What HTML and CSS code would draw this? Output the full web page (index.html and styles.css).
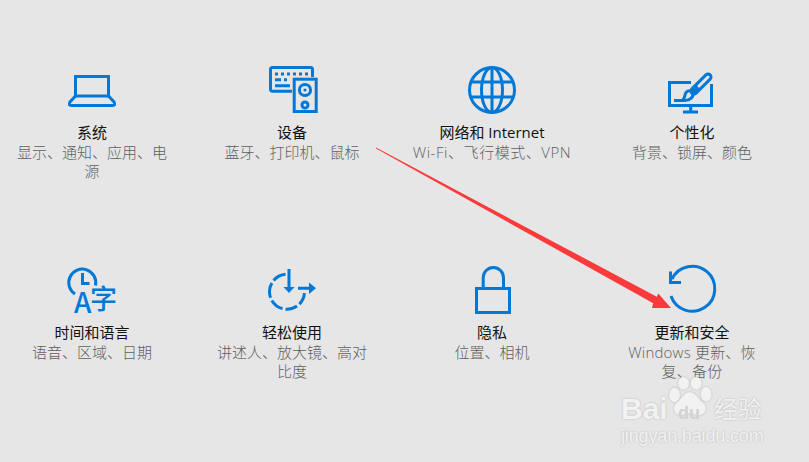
FILE: index.html
```html
<!DOCTYPE html>
<html>
<head>
	<meta charset="utf-8">
	<title>设置</title>
	<link rel="stylesheet" href="styles.css">
</head>
<body>
	<div class="grid">

		<div class="tile">
			<svg class="icon" viewBox="0 0 48 48">
				<rect x="7.5" y="10.5" width="33" height="19.5"/>
				<path d="M7.5 30 L2 36 Q0 39.5 3.5 39.5 H44.500 Q48 39.500 46 36 L40.500 30"/>
			</svg>
			<div class="title">系统</div>
			<div class="sub">显示、通知、应用、电源</div>
		</div>

		<div class="tile">
			<svg class="icon" viewBox="0 0 48 48">
				<path d="M24 25.200 H4.500 Q2.500 25.200 2.500 23 V3.500 Q2.500 1.500 4.500 1.500 H42.500 Q44.500 1.500 44.500 3.500 V11"/>
				<rect x="26.200" y="13.200" width="22" height="32.300"/>
				<circle cx="37" cy="24" r="5.600"/>
				<circle cx="37" cy="39" r="3"/>
				<path class="fill" d="M7 6.500h3v3h-3z M13 6.500h3v3h-3z M19 6.500h3v3h-3z M25 6.500h3v3h-3z M31 6.500h3v3h-3z M37 6.500h3v3h-3z M7 12.300h6v3h-6z M16 12.300h3v3h-3z M7 18.300h15v3h-15z"/>
				<circle class="fill" cx="37" cy="24" r="1.600"/>
			</svg>
			<div class="title">设备</div>
			<div class="sub">蓝牙、打印机、鼠标</div>
		</div>

		<div class="tile">
			<svg class="icon" viewBox="0 0 48 48">
				<circle cx="24" cy="24" r="22.500"/>
				<ellipse cx="24" cy="24" rx="10.500" ry="22.500"/>
				<path d="M24 1.500 V46.500 M3.500 16 H44.500 M3.500 31 H44.500"/>
			</svg>
			<div class="title">网络和 Internet</div>
			<div class="sub sub-wide">Wi-Fi、飞行模式、VPN</div>
		</div>

		<div class="tile">
			<svg class="icon" viewBox="0 0 48 48">
				<path d="M23 16.500 H1.500 V39.500 H43.500 V18"/>
				<path d="M22.700 39.500 V46 M15 46 H30"/>
				<path d="M6 34.500 H17 C22 34.500 26 31 25 26.500 C23.500 24 20 24 18 26.500 C16 29 18 32 14 34.500"/>
				<path class="handle" d="M26 25 L40 11"/>
				<path class="handle-in" d="M31 20 L40 11"/>
			</svg>
			<div class="title">个性化</div>
			<div class="sub">背景、锁屏、颜色</div>
		</div>

		<div class="tile">
			<svg class="icon" viewBox="0 0 48 48">
				<path d="M7 28 A13.500 13.500 0 1 1 27.500 19.500"/>
				<path d="M14.500 7 V17.500 H21.500"/>
				<text class="glyph glyph-a" x="6" y="47">A</text>
				<text class="glyph glyph-zi" x="22" y="43">字</text>
			</svg>
			<div class="title">时间和语言</div>
			<div class="sub">语音、区域、日期</div>
		</div>

		<div class="tile">
			<svg class="icon" viewBox="0 0 48 48">
				<circle cx="19" cy="25.700" r="17.500" pathLength="360" stroke-dasharray="40 10 40 10 45 10 50 10 45 100" stroke-dashoffset="-5"/>
				<path d="M21 3 V22 M30 22.300 H42"/>
				<path class="fill" d="M15.500 21 H26.500 L21 27z M41 16.500 L48 22.300 L41 28z"/>
			</svg>
			<div class="title">轻松使用</div>
			<div class="sub">讲述人、放大镜、高对比度</div>
		</div>

		<div class="tile">
			<svg class="icon" viewBox="0 0 48 48">
				<rect x="8.500" y="22.500" width="33" height="24"/>
				<path d="M15.200 21 V11.700 A10.150 10.150 0 0 1 35.500 11.700 V21"/>
			</svg>
			<div class="title">隐私</div>
			<div class="sub">位置、相机</div>
		</div>

		<div class="tile">
			<svg class="icon" viewBox="0 0 48 48">
				<path d="M3 30 A22.500 22.500 0 1 0 4 13"/>
				<path d="M2.500 5.500 V16.500 H13"/>
			</svg>
			<div class="title">更新和安全</div>
			<div class="sub sub-win">Windows 更新、恢复、备份</div>
		</div>

	</div>

	<!-- red arrow drawn on top of the screenshot -->
	<svg class="arrow" viewBox="0 0 809 462">
		<polygon points="376,147.500 656.800,296.700 658.300,293.500 671,308 652,308 653.200,303.300 376,148.500"/>
	</svg>

	<div class="mark">
		<svg class="paw" viewBox="0 0 60 50">
			<ellipse cx="14" cy="20" rx="6" ry="8"/>
			<ellipse cx="24" cy="7" rx="6" ry="7"/>
			<ellipse cx="38" cy="7" rx="6" ry="7"/>
			<ellipse cx="49" cy="19" rx="6" ry="8"/>
			<path d="M31 17 C38 17 40 25 46 29 C52 35 47 44 39 42 C33 40 29 40 23 42 C15 44 10 36 16 29 C22 25 24 17 31 17z"/>
		</svg>
		<span class="mark-bai">Bai</span>
		<span class="mark-du">du</span>
		<span class="mark-cn">经验</span>
		<span class="mark-url">jingyan.baidu.com</span>
	</div>
</body>
</html>
```

FILE: styles.css
```css
html, body {
	margin: 0;
	height: 100%;
	overflow: hidden;
}

body {
	background: #e6e6e6;
	font-family: "Open Sans", "Noto Sans CJK SC", sans-serif;
}

.grid {
	display: grid;
	grid-template-columns: repeat(4, 184px);
	grid-auto-rows: 200px;
	column-gap: 16px;
	padding-top: 66px;
}

.tile {
	display: flex;
	flex-direction: column;
	align-items: center;
	text-align: center;
}

.icon {
	width: 48px;
	height: 48px;
	margin-bottom: 8px;
	fill: none;
	stroke: #0078d7;
	stroke-width: 3;
	overflow: visible;
}

.icon .fill {
	fill: #0078d7;
	stroke: none;
}

.icon .handle {
	stroke-width: 9;
	stroke-linecap: round;
}

.icon .handle-in {
	stroke: #e6e6e6;
	stroke-width: 3;
	stroke-linecap: round;
}

.glyph {
	fill: #0078d7;
	stroke: none;
	font-family: "Noto Sans CJK SC", sans-serif;
	font-weight: 500;
}

.glyph-a {
	font-size: 28px;
}

.glyph-zi {
	font-size: 27px;
}

.title {
	font-size: 15px;
	line-height: 20px;
	color: #111;
}

.sub {
	width: 153px;
	margin-top: 1px;
	font-size: 15px;
	line-height: 19px;
	font-weight: 300;
	color: #5f5f5f;
}

/* latin in the original is wider than Open Sans Light */
.sub-wide {
	width: 170px;
	letter-spacing: 0.55px;
}

.sub-win {
	letter-spacing: 0.2px;
}

.arrow {
	position: absolute;
	left: 0;
	top: 0;
	width: 809px;
	height: 462px;
	fill: #fb3b3b;
}

.mark {
	position: absolute;
	left: 620px;
	top: 380px;
	width: 150px;
	height: 70px;
	color: #f2f2f2;
	font-family: "Liberation Sans", sans-serif;
	text-shadow: 0 0 2px #b0b0b0;
}

.mark span {
	position: absolute;
	white-space: nowrap;
}

.paw {
	position: absolute;
	left: 42px;
	top: -3px;
	width: 54px;
	height: 45px;
	fill: #f2f2f2;
	filter: drop-shadow(0 0 1px #b8b8b8);
}

.mark-bai {
	left: 1px;
	top: 13px;
	font-size: 30px;
	font-weight: bold;
	line-height: 32px;
}

.mark-du {
	left: 58px;
	top: 23px;
	font-size: 18px;
	font-weight: bold;
	line-height: 20px;
	color: #d2d2d2;
	text-shadow: none;
}

.mark-cn {
	left: 94px;
	top: 14px;
	font-family: "Noto Sans CJK SC", sans-serif;
	font-size: 24px;
	line-height: 28px;
}

.mark-url {
	left: 1px;
	top: 45px;
	font-size: 18px;
	line-height: 22px;
	letter-spacing: -0.15px;
}
```
